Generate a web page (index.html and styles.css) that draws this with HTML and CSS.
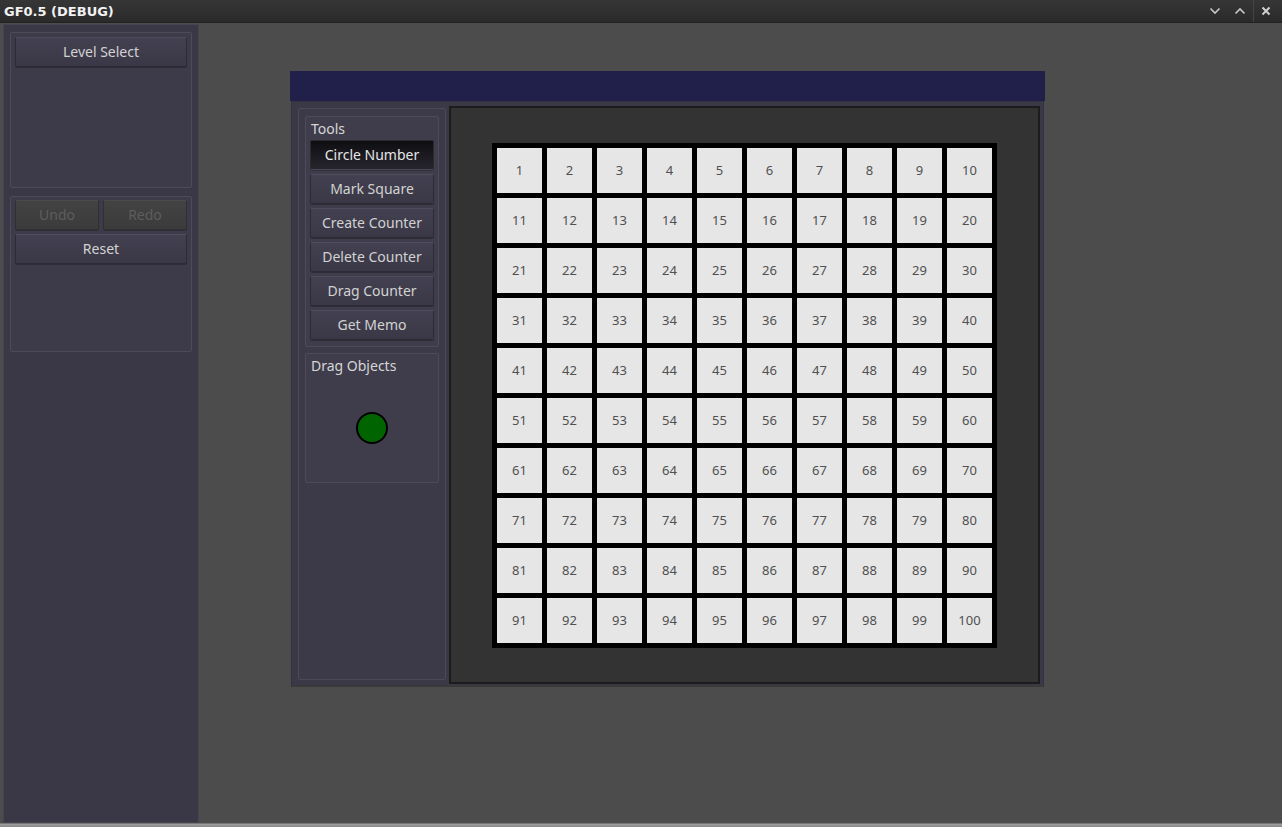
FILE: index.html
```html
<!DOCTYPE html>
<html>
<head>
<meta charset="utf-8">
<link rel="stylesheet" href="styles.css">
</head>
<body>
<div class="screen">
  <div class="titlebar">
    <span class="title">GF0.5 (DEBUG)</span>
    <div class="controls">
      <svg class="ctl ctl-min" width="12" height="8" viewBox="0 0 12 8"><path d="M1.5 1.5 L6 6 L10.5 1.5" fill="none" stroke="#c8c8c8" stroke-width="1.6"/></svg>
      <svg class="ctl ctl-max" width="12" height="8" viewBox="0 0 12 8"><path d="M1.5 6.5 L6 2 L10.5 6.5" fill="none" stroke="#c8c8c8" stroke-width="1.6"/></svg>
      <span class="ctl-sep"></span>
      <svg class="ctl close" width="10" height="10" viewBox="0 0 10 10"><path d="M1.5 1.5 L8.5 8.5 M8.5 1.5 L1.5 8.5" fill="none" stroke="#d0d0d0" stroke-width="2"/></svg>
    </div>
  </div>
  <div class="main">
    <aside class="sidebar">
      <div class="panel panel-level">
        <button class="btn btn-wide">Level Select</button>
      </div>
      <div class="panel panel-history">
        <div class="btn-row">
          <button class="btn btn-disabled">Undo</button>
          <button class="btn btn-disabled">Redo</button>
        </div>
        <button class="btn btn-wide">Reset</button>
      </div>
    </aside>
    <section class="canvas">
      <div class="window">
        <div class="window-header"></div>
        <div class="window-body">
          <div class="tool-column">
            <div class="subpanel tools">
              <div class="label">Tools</div>
              <button class="btn tool btn-pressed">Circle Number</button>
              <button class="btn tool">Mark Square</button>
              <button class="btn tool">Create Counter</button>
              <button class="btn tool">Delete Counter</button>
              <button class="btn tool">Drag Counter</button>
              <button class="btn tool">Get Memo</button>
            </div>
            <div class="subpanel drag">
              <div class="label">Drag Objects</div>
              <div class="drag-area"><div class="counter"></div></div>
            </div>
          </div>
          <div class="board">
            <div class="grid" id="grid">
              <div class="cell">1</div><div class="cell">2</div><div class="cell">3</div><div class="cell">4</div><div class="cell">5</div><div class="cell">6</div><div class="cell">7</div><div class="cell">8</div><div class="cell">9</div><div class="cell">10</div>
              <div class="cell">11</div><div class="cell">12</div><div class="cell">13</div><div class="cell">14</div><div class="cell">15</div><div class="cell">16</div><div class="cell">17</div><div class="cell">18</div><div class="cell">19</div><div class="cell">20</div>
              <div class="cell">21</div><div class="cell">22</div><div class="cell">23</div><div class="cell">24</div><div class="cell">25</div><div class="cell">26</div><div class="cell">27</div><div class="cell">28</div><div class="cell">29</div><div class="cell">30</div>
              <div class="cell">31</div><div class="cell">32</div><div class="cell">33</div><div class="cell">34</div><div class="cell">35</div><div class="cell">36</div><div class="cell">37</div><div class="cell">38</div><div class="cell">39</div><div class="cell">40</div>
              <div class="cell">41</div><div class="cell">42</div><div class="cell">43</div><div class="cell">44</div><div class="cell">45</div><div class="cell">46</div><div class="cell">47</div><div class="cell">48</div><div class="cell">49</div><div class="cell">50</div>
              <div class="cell">51</div><div class="cell">52</div><div class="cell">53</div><div class="cell">54</div><div class="cell">55</div><div class="cell">56</div><div class="cell">57</div><div class="cell">58</div><div class="cell">59</div><div class="cell">60</div>
              <div class="cell">61</div><div class="cell">62</div><div class="cell">63</div><div class="cell">64</div><div class="cell">65</div><div class="cell">66</div><div class="cell">67</div><div class="cell">68</div><div class="cell">69</div><div class="cell">70</div>
              <div class="cell">71</div><div class="cell">72</div><div class="cell">73</div><div class="cell">74</div><div class="cell">75</div><div class="cell">76</div><div class="cell">77</div><div class="cell">78</div><div class="cell">79</div><div class="cell">80</div>
              <div class="cell">81</div><div class="cell">82</div><div class="cell">83</div><div class="cell">84</div><div class="cell">85</div><div class="cell">86</div><div class="cell">87</div><div class="cell">88</div><div class="cell">89</div><div class="cell">90</div>
              <div class="cell">91</div><div class="cell">92</div><div class="cell">93</div><div class="cell">94</div><div class="cell">95</div><div class="cell">96</div><div class="cell">97</div><div class="cell">98</div><div class="cell">99</div><div class="cell">100</div>
            </div>
          </div>
        </div>
      </div>
    </section>
  </div>
  <div class="bottom-strip"></div>
</div>
</body>
</html>
```

FILE: styles.css
```css
* { box-sizing: border-box; }

html, body {
  margin: 0;
  padding: 0;
  background: #3a3a3a;
}

.screen {
  width: 1282px;
  height: 827px;
  display: flex;
  flex-direction: column;
  background: #3c3c3c;
  font-family: "Noto Sans", "Open Sans", sans-serif;
  overflow: hidden;
}

/* Title bar */
.titlebar {
  height: 23px;
  flex: none;
  display: flex;
  align-items: center;
  justify-content: space-between;
  padding-left: 4px;
  background: linear-gradient(#363636, #2a2a2a);
  border-bottom: 1px solid #222;
}

.title {
  font-family: "DejaVu Sans", sans-serif;
  font-weight: bold;
  font-size: 13px;
  color: #f2f2f2;
  line-height: 1;
  padding-top: 1px;
}

.controls {
  display: flex;
  align-items: center;
  height: 100%;
}

.ctl { display: block; }
.ctl-min { margin-right: 13px; }
.ctl-max { margin-right: 7px; }

.ctl-sep {
  width: 1px;
  height: 22px;
  background: #444;
  margin-right: 7px;
}

.close { margin-right: 11px; }

/* Main area */
.main {
  flex: 1;
  display: flex;
  background: #4c4c4c;
  min-height: 0;
}

.sidebar {
  width: 196px;
  margin-left: 3px;
  margin-top: 1px;
  background: #3a3846;
  border: 1px solid #46444f;
  border-radius: 2px;
  padding: 7px 6px 0 6px;
  display: flex;
  flex-direction: column;
  gap: 8px;
}

.panel {
  background: #3d3b4a;
  border: 1px solid #4d4b58;
  border-radius: 2px;
  padding: 4px 4px;
  display: flex;
  flex-direction: column;
  gap: 4px;
}

.panel-level { height: 156px; }
.panel-history { height: 156px; padding-top: 3px; }

.btn {
  font-family: "Noto Sans", "Open Sans", sans-serif;
  font-size: 14px;
  color: #d2d2d2;
  height: 30px;
  padding: 0 0 2px 0;
  background: linear-gradient(#434151, #3a3846);
  border: 1px solid #2c2a35;
  border-top-color: #4f4d5b;
  border-radius: 2px;
  box-shadow: 0 1px 0 rgba(0,0,0,0.25);
  cursor: default;
}

.btn-wide { width: 100%; }

.btn-row {
  display: flex;
  gap: 4px;
}

.btn-row .btn { flex: 1; }

.btn-disabled {
  background: linear-gradient(#434343, #3b3b3b);
  color: #5d5d5d;
  border-color: #303030;
  border-top-color: #4a4a4a;
}

/* Canvas with floating window */
.canvas {
  flex: 1;
  position: relative;
}

.window {
  margin-left: 91px;
  margin-top: 48px;
  width: 755px;
}

.window-header {
  height: 30px;
  background: #20204a;
}

.window-body {
  margin: 0 1px;
  height: 586px;
  background: #3b3947;
  border: 1px solid #34323e;
  border-bottom: 2px solid #3a3a3a;
  display: flex;
  align-items: flex-start;
  padding: 4px 3px 0 6px;
}

.tool-column {
  margin-top: 2px;
  width: 148px;
  height: 572px;
  background: #3c3a48;
  border: 1px solid #4b4957;
  border-radius: 2px;
  padding: 7px 6px;
  display: flex;
  flex-direction: column;
  gap: 6px;
}

.subpanel {
  background: #3f3d4b;
  border: 1px solid #4d4b59;
  border-radius: 2px;
  padding: 1px 4px 6px 4px;
  display: flex;
  flex-direction: column;
  gap: 4px;
}

.label {
  font-size: 14px;
  color: #d6d6d6;
  line-height: 20px;
  padding-left: 1px;
  padding-top: 1px;
  margin-bottom: -3px;
}

.tool { width: 100%; }

.btn-pressed {
  background: linear-gradient(#0e0e12, #26252d);
  border-color: #2a2a30;
  border-bottom-color: #4a4857;
  color: #e6e6e6;
}

.drag { height: 130px; }

.drag-area {
  flex: 1;
  display: flex;
  align-items: center;
  justify-content: center;
  padding-top: 2px;
}

.counter {
  width: 32px;
  height: 32px;
  border-radius: 50%;
  background: #006400;
  border: 2px solid #000;
}

/* Board */
.board {
  margin-left: 3px;
  width: 591px;
  height: 578px;
  background: #333333;
  border: 2px solid #1c1c1c;
  display: flex;
  align-items: center;
  justify-content: center;
}

.grid {
  background: #000;
  padding: 5px;
  display: grid;
  grid-template-columns: repeat(10, 45px);
  grid-auto-rows: 45px;
  gap: 5px;
}

.cell {
  background: #e6e6e6;
  color: #505050;
  font-size: 13px;
  display: flex;
  align-items: center;
  justify-content: center;
}

.bottom-strip {
  height: 4px;
  flex: none;
  background: linear-gradient(#a0a0a0, #888);
  border-top: 1px solid #777;
}
```
